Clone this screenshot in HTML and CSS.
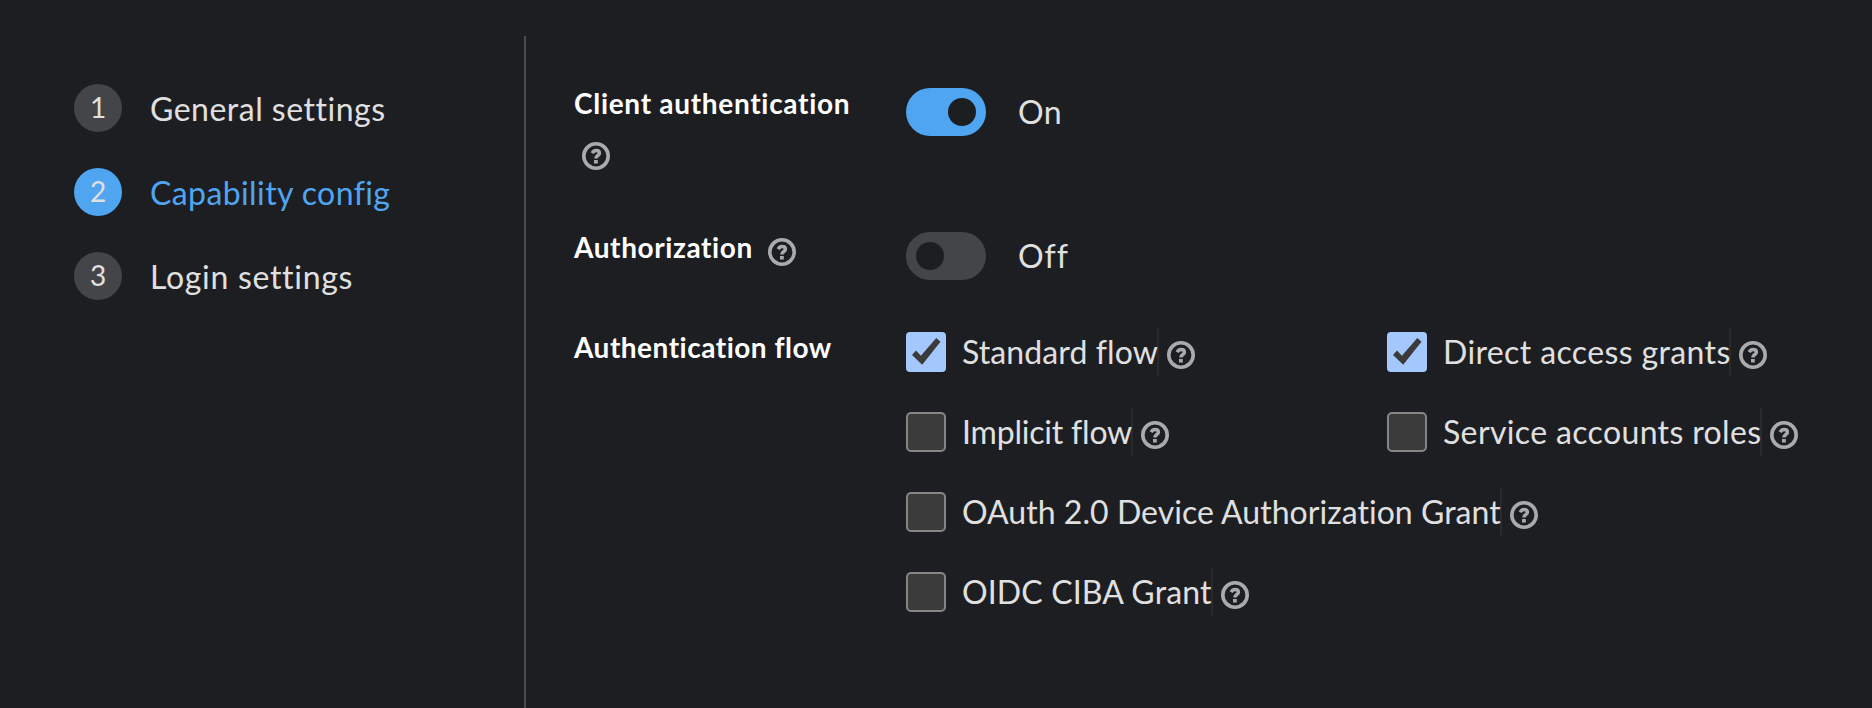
FILE: index.html
```
<!DOCTYPE html>
<html lang="en">
<head>
<meta charset="utf-8">
<title>Capability config</title>
<link rel="stylesheet" href="styles.css">
</head>
<body>
<svg class="defs" width="0" height="0" aria-hidden="true">
  <symbol id="help" viewBox="0 0 28 28">
    <circle cx="14" cy="14" r="12.2" fill="none" stroke="currentColor" stroke-width="3.6"/>
    <path d="M10.1 11.1C11.2 9.3 12.5 8.6 14.1 8.6C16.1 8.6 17.4 9.7 17.4 11.3C17.4 13.7 13.9 13.4 13.9 16.6" fill="none" stroke="currentColor" stroke-width="3.5"/>
    <rect x="12" y="18" width="3.8" height="3.5" fill="currentColor"/>
  </symbol>
  <symbol id="check" viewBox="0 0 40 40">
    <path d="M6 23L10 18.5L14.9 23.7L30.3 6L34.5 9.7L16.2 32.7Z" fill="#3b3b3b"/>
  </symbol>
</svg>
<div class="wizard">
  <nav class="steps">
    <a class="step"><span class="num">1</span><span class="name t-general">General settings</span></a>
    <a class="step current"><span class="num">2</span><span class="name t-capability">Capability config</span></a>
    <a class="step"><span class="num">3</span><span class="name t-login">Login settings</span></a>
  </nav>
  <main class="form">
    <div class="row row-client">
      <div class="label"><span class="t-client">Client authentication</span><svg class="help help-below"><use href="#help"/></svg></div>
      <div class="control"><span class="switch on"><span class="knob"></span></span><span class="state t-on">On</span></div>
    </div>
    <div class="row row-authz">
      <div class="label"><span class="t-authz">Authorization</span><svg class="help help-side"><use href="#help"/></svg></div>
      <div class="control"><span class="switch"><span class="knob"></span></span><span class="state t-off">Off</span></div>
    </div>
    <div class="row">
      <div class="label"><span class="t-flow">Authentication flow</span></div>
      <div class="options">
        <div class="option"><span class="box checked"><svg><use href="#check"/></svg></span><span class="text t-standard">Standard flow</span><svg class="help"><use href="#help"/></svg></div>
        <div class="option"><span class="box checked"><svg><use href="#check"/></svg></span><span class="text t-direct">Direct access grants</span><svg class="help"><use href="#help"/></svg></div>
        <div class="option"><span class="box"></span><span class="text t-implicit">Implicit flow</span><svg class="help"><use href="#help"/></svg></div>
        <div class="option"><span class="box"></span><span class="text t-service">Service accounts roles</span><svg class="help"><use href="#help"/></svg></div>
        <div class="option wide"><span class="box"></span><span class="text t-oauth">OAuth 2.0 Device Authorization Grant</span><svg class="help"><use href="#help"/></svg></div>
        <div class="option wide"><span class="box"></span><span class="text t-ciba">OIDC CIBA Grant</span><svg class="help"><use href="#help"/></svg></div>
      </div>
    </div>
  </main>
</div>
</body>
</html>
```
FILE: styles.css
```
* { box-sizing: border-box; }
body {
  margin: 0;
  background: #1d1e22;
  color: #e0e0e0;
  font-family: Lato, "Liberation Sans", sans-serif;
  font-size: 32px;
  font-variant-ligatures: none;
  line-height: 48px;
  white-space: nowrap;
}
.defs { display: block; height: 0; }
.wizard { display: flex; height: 708px; padding-top: 36px; overflow: hidden; }
.steps {
  width: 526px;
  padding: 48px 0 0 74px;
  border-right: 2px solid #4b4c4f;
  display: flex;
  flex-direction: column;
  gap: 36px;
}
.step { display: flex; gap: 28px; height: 48px; }
.num {
  width: 48px;
  height: 48px;
  border-radius: 50%;
  background: #444548;
  text-align: center;
  font-size: 28px;
  line-height: 46px;
}
.name { padding-top: 1px; }
.current .num { background: #4fa5f0; }
.current .name { color: #4fa5f0; }
.form { padding: 52px 0 0 48px; }
.row { display: grid; grid-template-columns: 332px 1fr; }
.row-client { height: 144px; }
.row-authz { height: 100px; }
.label {
  color: #fff;
  font-size: 28px;
  font-weight: 700;
  line-height: 30px;
  display: flex;
  flex-wrap: wrap;
  align-content: flex-start;
  align-items: flex-start;
}
.help { width: 28px; height: 28px; color: #a9aaab; flex: none; display: block; }
.help-below { margin: 24px 60px 0 8px; }
.help-side { margin: 6px 0 0 15px; }
.control { display: flex; gap: 32px; }
.switch {
  width: 80px;
  height: 48px;
  border-radius: 24px;
  background: #444548;
  padding: 10px;
  display: flex;
}
.switch.on { background: #4fa5f0; justify-content: flex-end; }
.knob { width: 28px; height: 28px; border-radius: 50%; background: #1d1e22; }
.options {
  display: grid;
  grid-template-columns: 481px 440px;
  grid-auto-rows: 48px;
  row-gap: 32px;
  margin-top: -4px;
}
.option { display: flex; align-items: flex-start; }
.wide { grid-column: 1 / 3; }
.box {
  width: 40px;
  height: 40px;
  margin: 4px 16px 0 0;
  border: 2px solid #858585;
  border-radius: 5px;
  background: #3b3b3b;
  flex: none;
}
.box.checked { border: 0; border-radius: 4px; background: #a4c8fd; }
.box svg { width: 40px; height: 40px; display: block; }
.text { height: 48px; border-right: 2px solid #292a2e; margin-right: 8px; }
.option .help { margin-top: 13px; }
.t-general { letter-spacing: 0.5px; }
.t-capability { letter-spacing: 0.4px; }
.t-login { letter-spacing: 0.7px; }
.t-client { letter-spacing: 0.7px; }
.t-authz { letter-spacing: 0.6px; }
.t-flow { letter-spacing: 0.5px; }
.t-on { letter-spacing: 0.5px; }
.t-off { letter-spacing: 1px; }
.t-standard { width: 197px; letter-spacing: 0.1px; }
.t-implicit { width: 171px; letter-spacing: -0.2px; }
.t-direct { width: 288px; letter-spacing: 0.38px; }
.t-service { width: 319px; letter-spacing: 0.36px; }
.t-oauth { width: 540px; letter-spacing: 0.04px; }
.t-ciba { width: 251px; letter-spacing: 0.14px; }
```
